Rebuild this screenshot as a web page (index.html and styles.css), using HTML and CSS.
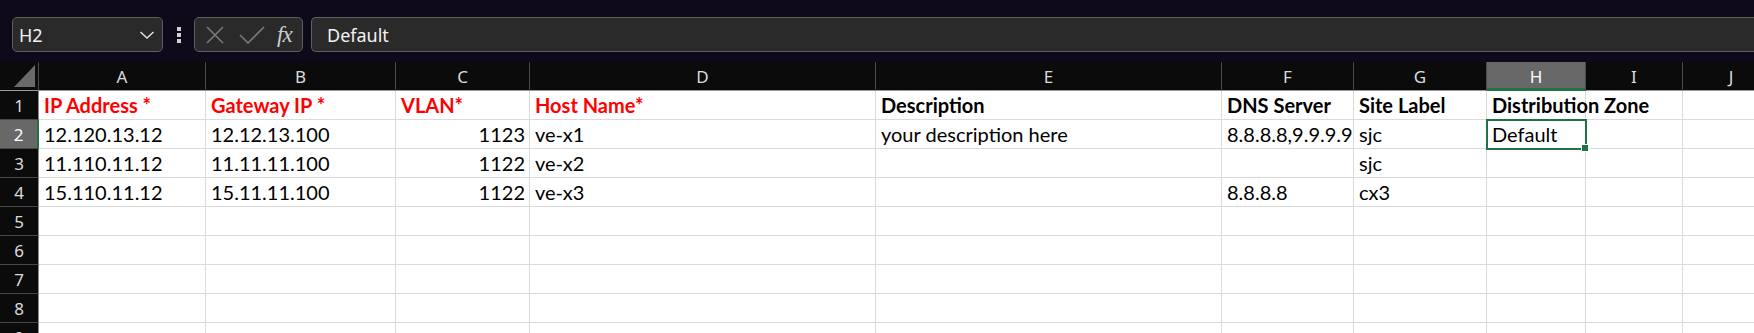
FILE: index.html
```html
<!DOCTYPE html>
<html lang="en">
<head>
    <meta charset="UTF-8">
    <title>Sheet1</title>
    <link rel="stylesheet" href="styles.css">
</head>
<body>
    <div class="toolbar">
        <div class="namebox">
            <span>H2</span>
            <svg class="chev" width="16" height="10" viewBox="0 0 16 10"><path d="M1.5 2 L8 8 L14.5 2" fill="none" stroke="#dcdcdc" stroke-width="1.6"/></svg>
        </div>
        <div class="more"><i></i><i></i><i></i></div>
        <div class="fxbox">
            <svg width="20" height="18" viewBox="0 0 20 18"><path d="M2 1 L18 17 M18 1 L2 17" stroke="#7a7a7a" stroke-width="1.6" fill="none"/></svg>
            <svg width="26" height="18" viewBox="0 0 26 18"><path d="M1 9 L9 17 L25 1" stroke="#7a7a7a" stroke-width="1.6" fill="none"/></svg>
            <span class="fx">fx</span>
        </div>
        <div class="formula">Default</div>
    </div>

    <div class="sheet">
        <div class="corner"><b></b></div>
        <div class="ch">A</div><div class="ch">B</div><div class="ch">C</div><div class="ch">D</div><div class="ch">E</div>
        <div class="ch">F</div><div class="ch">G</div><div class="ch on">H</div><div class="ch">I</div><div class="ch">J</div>

        <div class="rh">1</div>
        <div class="c req">IP Address *</div>
        <div class="c req">Gateway IP *</div>
        <div class="c req">VLAN*</div>
        <div class="c req">Host Name*</div>
        <div class="c bold">Description</div>
        <div class="c bold">DNS Server</div>
        <div class="c bold">Site Label</div>
        <div class="c bold over">Distribution Zone</div>
        <div class="c"></div>
        <div class="c"></div>

        <div class="rh on">2</div>
        <div class="c">12.120.13.12</div>
        <div class="c">12.12.13.100</div>
        <div class="c num">1123</div>
        <div class="c">ve-x1</div>
        <div class="c">your description here</div>
        <div class="c over">8.8.8.8,9.9.9.9</div>
        <div class="c">sjc</div>
        <div class="c sel">Default</div>
        <div class="c"></div>
        <div class="c"></div>

        <div class="rh">3</div>
        <div class="c">11.110.11.12</div>
        <div class="c">11.11.11.100</div>
        <div class="c num">1122</div>
        <div class="c">ve-x2</div>
        <div class="c"></div>
        <div class="c"></div>
        <div class="c">sjc</div>
        <div class="c"></div>
        <div class="c"></div>
        <div class="c"></div>

        <div class="rh">4</div>
        <div class="c">15.110.11.12</div>
        <div class="c">15.11.11.100</div>
        <div class="c num">1122</div>
        <div class="c">ve-x3</div>
        <div class="c"></div>
        <div class="c">8.8.8.8</div>
        <div class="c">cx3</div>
        <div class="c"></div>
        <div class="c"></div>
        <div class="c"></div>

        <div class="rh">5</div>
        <div class="c"></div><div class="c"></div><div class="c"></div><div class="c"></div><div class="c"></div>
        <div class="c"></div><div class="c"></div><div class="c"></div><div class="c"></div><div class="c"></div>

        <div class="rh">6</div>
        <div class="c"></div><div class="c"></div><div class="c"></div><div class="c"></div><div class="c"></div>
        <div class="c"></div><div class="c"></div><div class="c"></div><div class="c"></div><div class="c"></div>

        <div class="rh">7</div>
        <div class="c"></div><div class="c"></div><div class="c"></div><div class="c"></div><div class="c"></div>
        <div class="c"></div><div class="c"></div><div class="c"></div><div class="c"></div><div class="c"></div>

        <div class="rh">8</div>
        <div class="c"></div><div class="c"></div><div class="c"></div><div class="c"></div><div class="c"></div>
        <div class="c"></div><div class="c"></div><div class="c"></div><div class="c"></div><div class="c"></div>

        <div class="rh">9</div>
        <div class="c"></div><div class="c"></div><div class="c"></div><div class="c"></div><div class="c"></div>
        <div class="c"></div><div class="c"></div><div class="c"></div><div class="c"></div><div class="c"></div>
    </div>
</body>
</html>
```

FILE: styles.css
```css
html,body{
    margin:0;
    height:100%;
    overflow:hidden;
}
body{
    background:#0e0a1a;
    font-family:"Noto Sans","Open Sans",sans-serif;
}
/* formula bar */
.toolbar{
    display:flex;
    align-items:flex-start;
    height:62px;
    box-sizing:border-box;
    padding:17px 0 0 12px;
}
.namebox,.fxbox,.formula{
    height:35px;
    box-sizing:border-box;
    background:#2a2a2a;
    border:1px solid #5e5e5e;
    border-radius:5px;
    display:flex;
    align-items:center;
    color:#f2f2f2;
    font-size:18px;
}
.namebox{
    width:151px;
    padding:0 7px 0 6px;
    justify-content:space-between;
}
.more{
    width:31px;
    height:35px;
    display:flex;
    flex-direction:column;
    align-items:center;
    justify-content:center;
    gap:2px;
}
.more i{
    width:4px;
    height:4px;
    background:#d0d0d0;
}
.fxbox{
    width:109px;
    padding:0 0 0 10px;
    gap:14px;
}
.fx{
    font-family:"Liberation Serif",serif;
    font-style:italic;
    font-size:23px;
    color:#cfcfcf;
    margin-left:-2px;
    letter-spacing:-1px;
}
.formula{
    flex:1;
    margin-left:8px;
    padding-left:15px;
    border-right:none;
    border-radius:5px 0 0 5px;
}
/* grid */
.sheet{
    display:grid;
    grid-template-columns:39px 167px 190px 134px 346px 346px 132px 133px 99px 97px 97px;
    grid-auto-rows:29px;
    background:#fff;
}
.corner,.ch,.rh{
    background:#0b0b0b;
    color:#dcdcdc;
    font-size:17px;
    box-sizing:border-box;
    display:flex;
    align-items:center;
    justify-content:center;
}
.corner{
    border-right:1px solid #4a4a4a;
    border-bottom:1px solid #9a9a9a;
    align-items:flex-end;
    justify-content:flex-end;
    padding:0 3px 3px 0;
}
.corner b{
    width:0;
    height:0;
    border-left:21px solid transparent;
    border-bottom:22px solid #6a6a6a;
}
.ch{
    border-right:1px solid #4a4a4a;
    border-bottom:1px solid #9a9a9a;
    padding-top:1px;
}
.ch.on{
    background:#686868;
    color:#fff;
    border-bottom:3px solid #217346;
    padding-top:3px;
}
.rh{
    border-bottom:1px solid #474747;
    border-right:1px solid #8a8a8a;
}
.rh.on{
    background:#686868;
    color:#fff;
    border-right:2px solid #217346;
}
.c{
    font-family:Lato,"Open Sans",sans-serif;
    font-size:20px;
    line-height:28px;
    color:#000;
    box-sizing:border-box;
    border-right:1px solid #dadada;
    border-bottom:1px solid #dadada;
    padding:0 4px 0 5px;
    white-space:nowrap;
}
.c.num{
    text-align:right;
}
.c.req{
    color:#ff0000;
    font-weight:bold;
}
.c.bold{
    font-weight:bold;
}
.c.over{
    overflow:visible;
    position:relative;
    z-index:1;
}
.c.sel{
    position:relative;
    outline:2px solid #217346;
    outline-offset:-1px;
    z-index:2;
}
.c.sel::after{
    content:"";
    position:absolute;
    right:-4px;
    bottom:-4px;
    width:6px;
    height:6px;
    background:#217346;
    border:1px solid #fff;
}
```
